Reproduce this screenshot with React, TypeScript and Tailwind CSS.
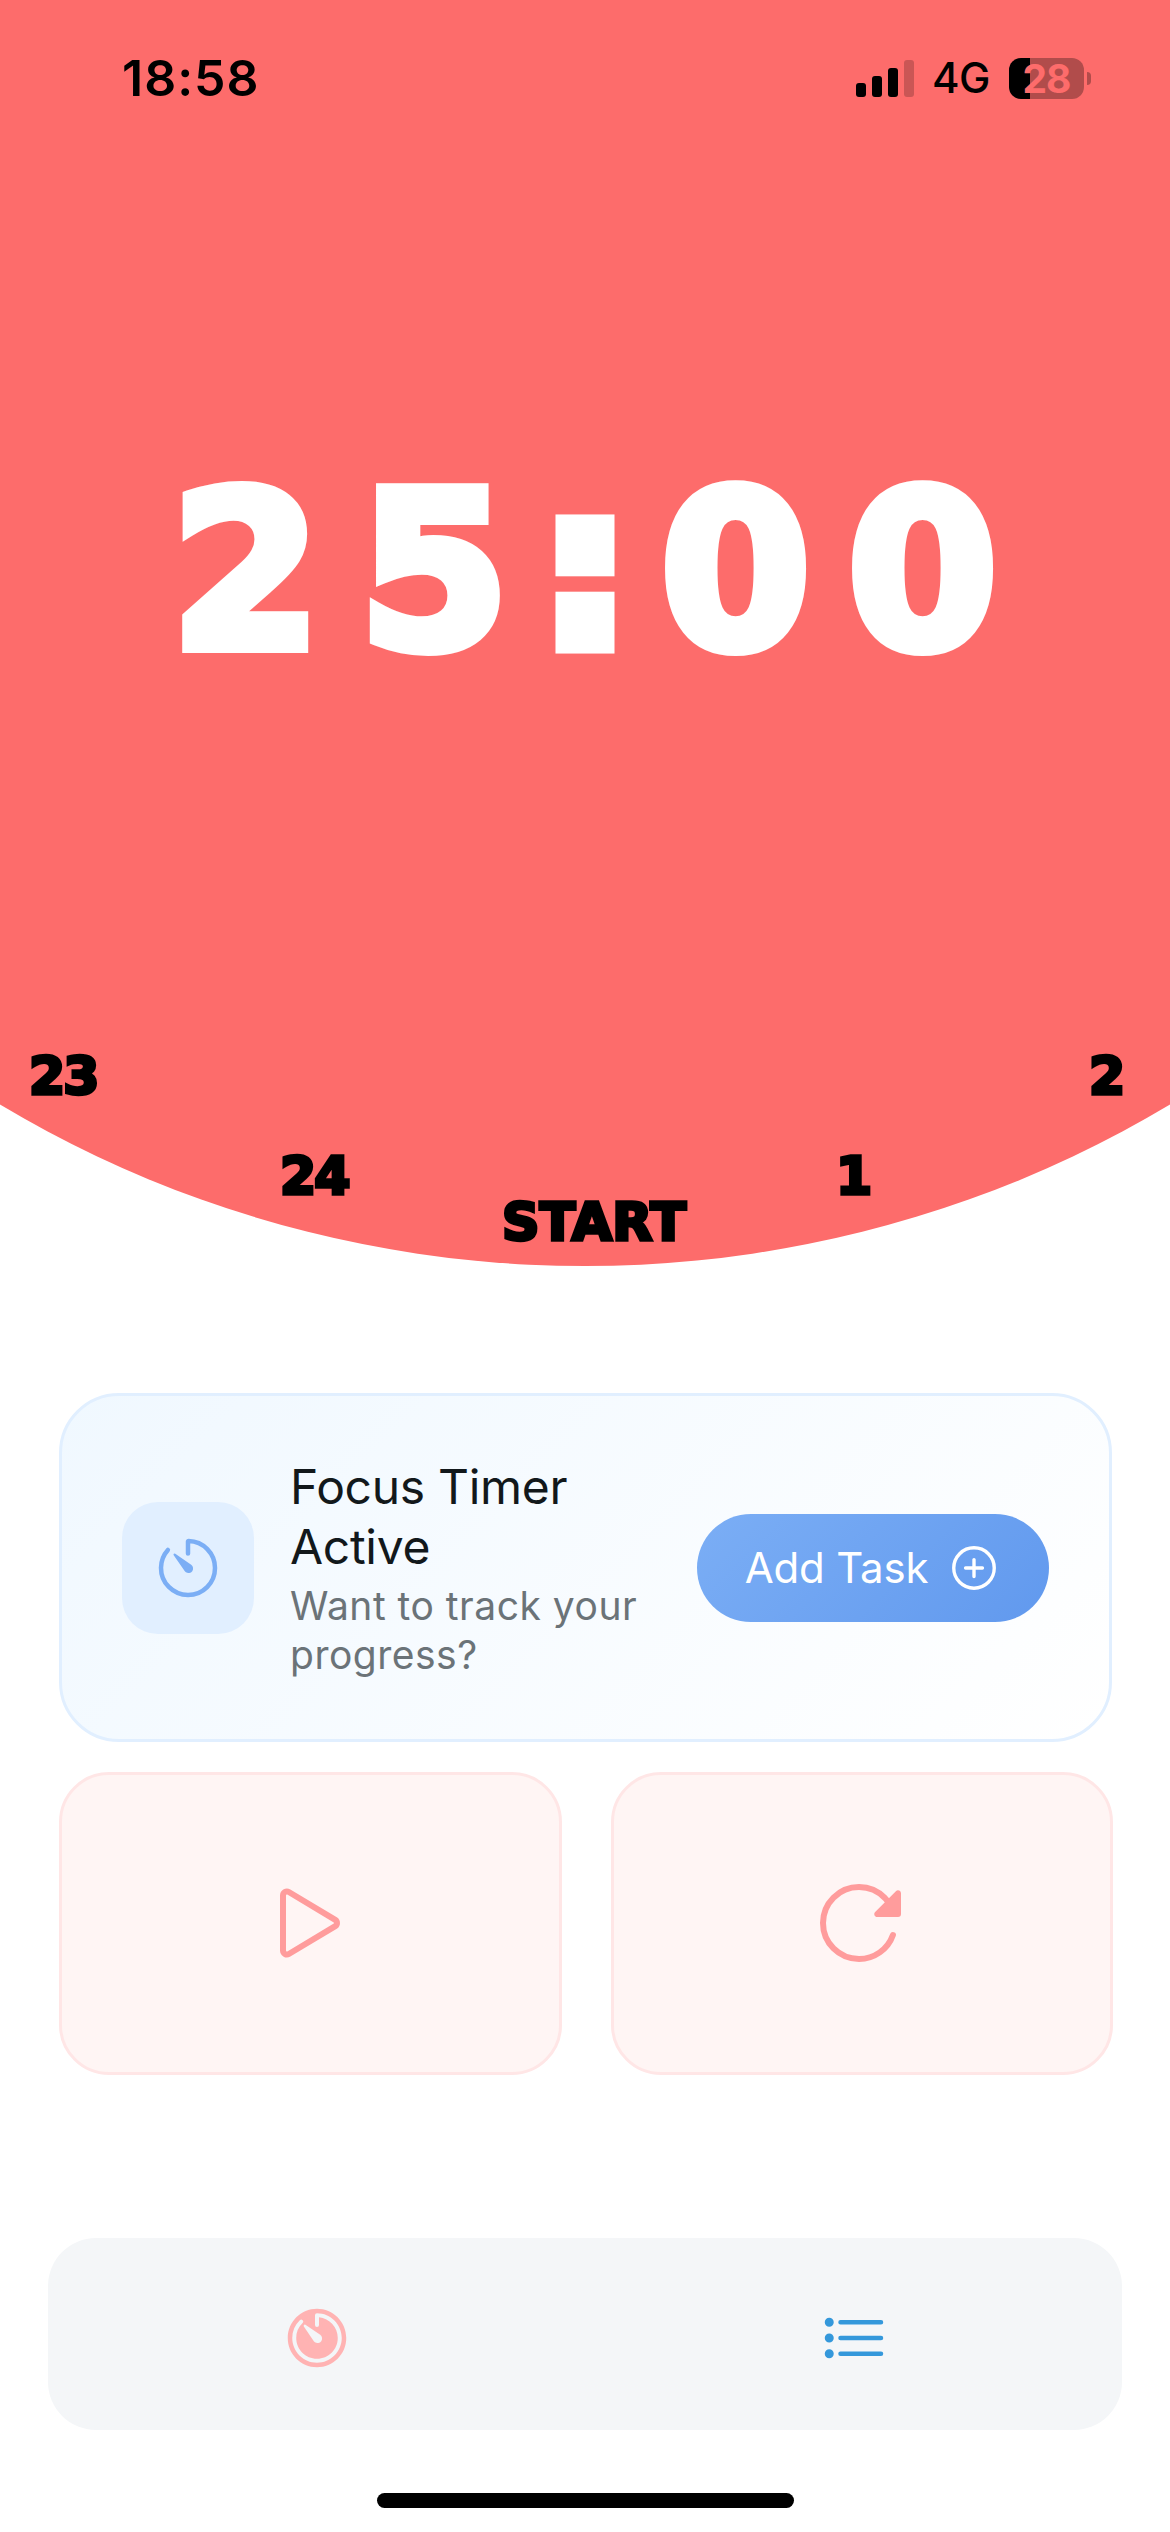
import React from "react";
import {
  IoAddCircleOutline,
  IoListOutline,
  IoPlayOutline,
  IoReload,
  IoTimer,
  IoTimerOutline,
} from "react-icons/io5";

const dialMarks = [
  { label: "23", place: "left-[29px] top-[1046px] tracking-[-2px]" },
  { label: "24", place: "left-[280px] top-[1146px] tracking-[-2px]" },
  { label: "START", place: "left-[502px] top-[1192px] tracking-[0.4px]" },
  { label: "1", place: "left-[836px] top-[1146px]" },
  { label: "2", place: "left-[1089px] top-[1046px]" },
];

function StatusBar() {
  return (
    <div className="flex h-[156px] items-center justify-between pr-[79px] pl-[122px]">
      <span className="text-[50px] leading-none font-semibold tracking-[1px]">18:58</span>
      <div className="flex items-center">
        <div className="flex h-[37px] items-end gap-[6px]">
          <i className="h-[14px] w-[10px] rounded-[3px] bg-black" />
          <i className="h-[21px] w-[10px] rounded-[3px] bg-black" />
          <i className="h-[29px] w-[10px] rounded-[3px] bg-black" />
          <i className="h-[37px] w-[10px] rounded-[3px] bg-black/20" />
        </div>
        <span className="ml-[18px] w-[58px] text-[42px] leading-[48px] font-medium tracking-[-0.5px]">4G</span>
        <div className="ml-[19px] flex h-[41px] w-[75px] items-center justify-center rounded-[12px] bg-[linear-gradient(90deg,#000_21px,#b14c4b_21px)] text-[39px] leading-[41px] font-bold tracking-[-1px] text-[#fd6c6b]">
          28
        </div>
        <i className="ml-[3px] h-[13px] w-[4px] rounded-r-full bg-[#b14c4b]" />
      </div>
    </div>
  );
}

export default function App() {
  return (
    <div className="flex h-[2532px] w-[1170px] flex-col overflow-hidden bg-white font-['Inter',sans-serif] text-black">
      <header className="relative h-[1266px] overflow-hidden">
        <div className="absolute bottom-0 left-1/2 size-[2282px] -translate-x-1/2 rounded-full bg-[#fd6c6b]" />
        <div className="relative">
          <StatusBar />
          <h1 className="mt-[309px] flex pl-[152px] font-['DejaVu_Sans',sans-serif] text-[215px] leading-[215px] font-bold text-white [-webkit-text-stroke:12px_white]">
            <span className="w-[188px] text-center">2</span>
            <span className="w-[188px] text-center">5</span>
            <span className="-mt-[4px] w-[114px] text-center [-webkit-text-stroke:21px_white]">:</span>
            <span className="w-[187px] text-center">0</span>
            <span className="w-[187px] text-center">0</span>
          </h1>
        </div>
        {dialMarks.map((m) => (
          <span
            key={m.label}
            className={`absolute font-['DejaVu_Sans',sans-serif] text-[52px] leading-[61px] font-bold [-webkit-text-stroke:3.5px_black] ${m.place}`}
          >
            {m.label}
          </span>
        ))}
      </header>

      <main className="mt-[127px] flex flex-col gap-[30px] pr-[58px] pl-[59px]">
        <section className="flex h-[349px] items-center rounded-[60px] border-[3px] border-[#e1efff] bg-[linear-gradient(135deg,#f0f8ff,#ffffff)] px-[60px]">
          <div className="flex size-[132px] shrink-0 items-center justify-center rounded-[36px] bg-[#e1efff] text-[#7baef5]">
            <IoTimerOutline size={72} />
          </div>
          <div className="ml-[36px] flex-1">
            <h2 className="text-[48px] leading-[60px] tracking-[-0.3px] text-[#12181b]">
              Focus Timer
              <br />
              Active
            </h2>
            <p className="mt-[4px] text-[39px] leading-[49px] tracking-[0.5px] whitespace-nowrap text-[#6b7378]">
              Want to track your
              <br />
              progress?
            </p>
          </div>
          <button className="flex h-[108px] w-[352px] shrink-0 items-center justify-center gap-[19px] rounded-full bg-[linear-gradient(135deg,#7baef5,#6199ee)] text-[42px] tracking-[-0.2px] whitespace-nowrap text-white">
            Add Task
            <IoAddCircleOutline size={54} />
          </button>
        </section>

        <div className="grid w-[1054px] grid-cols-2 gap-[49px]">
          <button className="flex h-[303px] items-center justify-center rounded-[50px] border-[3px] border-[#ffe6e6] bg-[#fff5f4] pb-px text-[#ff9c9c]">
            <IoPlayOutline size={96} />
          </button>
          <button className="flex h-[303px] items-center justify-center rounded-[50px] border-[3px] border-[#ffe6e6] bg-[#fff5f4] pb-px text-[#ff9c9c]">
            <IoReload size={96} />
          </button>
        </div>
      </main>

      <nav className="mx-[48px] mt-[163px] grid h-[192px] grid-cols-2 items-center justify-items-center rounded-[48px] bg-[#f4f6f8] pt-[8px]">
        <IoTimer size={72} className="text-[#ffb3b3]" />
        <IoListOutline size={72} className="text-[#3498db]" />
      </nav>
      <div className="mx-auto mt-[63px] h-[15px] w-[417px] rounded-full bg-black" />
    </div>
  );
}
